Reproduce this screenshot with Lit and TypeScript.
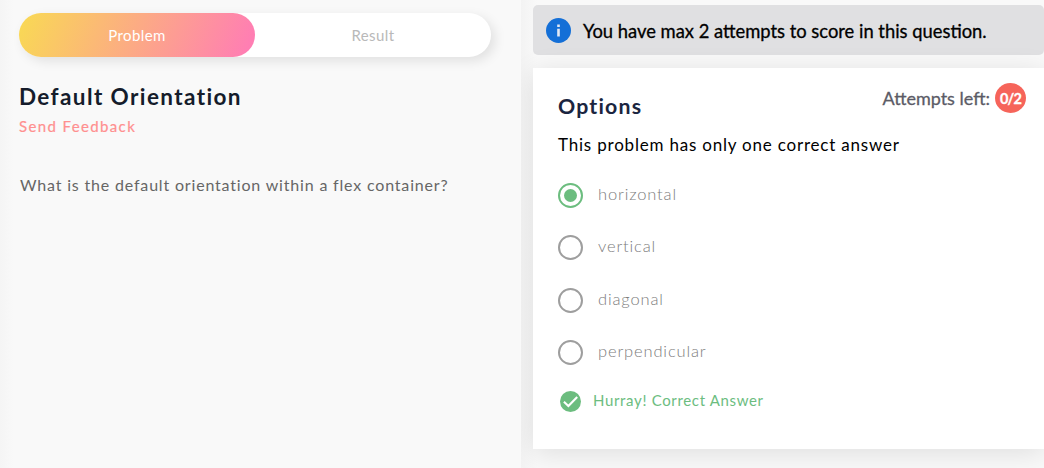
import { LitElement, html, css } from "lit";
import { customElement, property, state } from "lit/decorators.js";
import { classMap } from "lit/directives/class-map.js";

@customElement("option-row")
class OptionRow extends LitElement {
  @property() label = "";
  @property({ type: Boolean }) checked = false;

  static styles = css`
    :host { display: block; }
    .row { display: flex; align-items: center; gap: 15px; height: 25px; cursor: pointer; }
    .ring {
      box-sizing: border-box; width: 25px; height: 25px; flex: none;
      border: 2px solid #9e9e9e; border-radius: 50%;
      display: grid; place-items: center;
    }
    .ring.on { border-color: #6cbd7f; }
    .dot { width: 13px; height: 13px; border-radius: 50%; background: #6cbd7f; }
    .label { font-size: 16.5px; line-height: 20px; letter-spacing: 0.85px; color: #7c7c7c; font-weight: 300; padding-bottom: 3px; }
  `;

  render() {
    return html`<div class="row">
      <span class=${classMap({ ring: true, on: this.checked })}>
        ${this.checked ? html`<span class="dot"></span>` : ""}
      </span>
      <span class="label">${this.label}</span>
    </div>`;
  }
}

@customElement("app-root")
class AppRoot extends LitElement {
  @state() selected = "horizontal";
  private options = ["horizontal", "vertical", "diagonal", "perpendicular"];

  static styles = css`
    :host {
      display: block; height: 468px; overflow: hidden;
      font-family: Lato, "Open Sans", sans-serif;
    }
    .page { display: flex; height: 468px; background: #f9f9f9; }
    .problem {
      box-sizing: border-box; width: 521px; flex: none; padding: 13px 30px 0 19px;
      background: linear-gradient(90deg, #f5f5f5 0, #f9f9f9 14px);
    }
    .tabs {
      display: flex; height: 44px; border-radius: 22px; background: #fff;
      box-shadow: 4px 4px 12px rgba(0, 0, 0, 0.1);
    }
    .tab {
      box-sizing: border-box; flex: 1; display: flex; align-items: center; justify-content: center;
      padding-bottom: 1px; border-radius: 22px; font-size: 15px; letter-spacing: 0.4px; color: #b9b9b9;
    }
    .tab.active { color: #fff; background: linear-gradient(112deg, #f9d756 3%, #ff7eb3 96%); }
    .title {
      margin: 26px 0 0; font-size: 22.5px; line-height: 28px; font-weight: 700;
      letter-spacing: 1.4px; color: #151c2b;
    }
    .feedback { margin-top: 5px; font-size: 15px; line-height: 20px; letter-spacing: 1.37px; color: #ff9090; -webkit-text-stroke: 0.2px #ff9090; }
    .question { margin: 39px 0 0; padding-left: 1px; font-size: 16px; line-height: 20px; letter-spacing: 0.82px; color: #666; white-space: nowrap; }
    .answers {
      flex: 1; min-width: 0; padding: 5px 0 0 12px; overflow: hidden;
      background: linear-gradient(90deg, #f3f3f3 0, #f9f9f9 16px);
    }
    .notice {
      box-sizing: border-box; height: 50px; border-radius: 5px; background: #e0e0e2;
      display: flex; align-items: center; gap: 12px; padding: 0 0 0 13px;
    }
    .notice-text { font-size: 18.37px; line-height: 24px; color: #000; -webkit-text-stroke: 0.3px #000; padding-top: 1px; white-space: nowrap; }
    .info { display: block; width: 25px; height: 25px; flex: none; }
    .card {
      box-sizing: border-box; height: 381px; margin-top: 13px; padding: 15px 18px 0 25px;
      background: #fff; box-shadow: 0 4px 26px rgba(0, 0, 0, 0.11);
    }
    .head { display: flex; justify-content: space-between; height: 50px; }
    .heading { margin: 9px 0 0; font-size: 21.3px; line-height: 28px; font-weight: 700; letter-spacing: 1.2px; color: #1b2540; }
    .attempts { display: flex; align-items: center; gap: 5px; height: 30px; color: #5b5b66; font-size: 18px; -webkit-text-stroke: 0.3px #5b5b66; }
    .attempts-text { padding-bottom: 1px; }
    .badge {
      width: 31px; height: 30px; border-radius: 50%; background: #f6645a; color: #fff;
      display: grid; place-items: center; font-size: 14.5px; font-weight: 700; letter-spacing: -0.8px;
      -webkit-text-stroke: 0.3px #fff;
    }
    .hint { margin: 0; font-size: 17px; line-height: 24px; color: #000; letter-spacing: 0.8px; white-space: nowrap; }
    .list { display: grid; gap: 27.4px; margin-top: 26px; }
    .result { display: flex; align-items: center; gap: 12px; margin: 26px 0 0 2px; height: 21px; color: #6cbd7f; }
    .result-text { font-size: 15px; line-height: 20px; letter-spacing: 0.66px; padding-bottom: 3px; }
    .check { display: block; width: 21px; height: 21px; }
  `;

  render() {
    return html`<div class="page">
      <section class="problem">
        <nav class="tabs"><span class="tab active">Problem</span><span class="tab">Result</span></nav>
        <h1 class="title">Default Orientation</h1>
        <div class="feedback">Send Feedback</div>
        <p class="question">What is the default orientation within a flex container?</p>
      </section>
      <section class="answers">
        <div class="notice">
          <svg class="info" viewBox="0 0 25 25">
            <circle cx="12.5" cy="12.5" r="12.5" fill="#146fd7"></circle>
            <path d="M11.2 6.6h2.6v2.4h-2.6zM11.2 10.8h2.6v7.6h-2.6z" fill="#e4e9f4"></path>
          </svg>
          <span class="notice-text">You have max 2 attempts to score in this question.</span>
        </div>
        <div class="card">
          <div class="head">
            <h2 class="heading">Options</h2>
            <div class="attempts"><span class="attempts-text">Attempts left:</span><span class="badge">0/2</span></div>
          </div>
          <p class="hint">This problem has only one correct answer</p>
          <div class="list">
            ${this.options.map(
              (o) => html`<option-row .label=${o} .checked=${o === this.selected} @click=${() => (this.selected = o)}></option-row>`
            )}
          </div>
          <div class="result">
            <svg class="check" viewBox="0 0 21 21">
              <circle cx="10.5" cy="10.5" r="10.5" fill="#6cbd7f"></circle>
              <path d="M3.9 10.8 8.4 15 17.2 6" fill="none" stroke="#fff" stroke-width="2.1"></path>
            </svg>
            <span class="result-text">Hurray! Correct Answer</span>
          </div>
        </div>
      </section>
    </div>`;
  }
}
